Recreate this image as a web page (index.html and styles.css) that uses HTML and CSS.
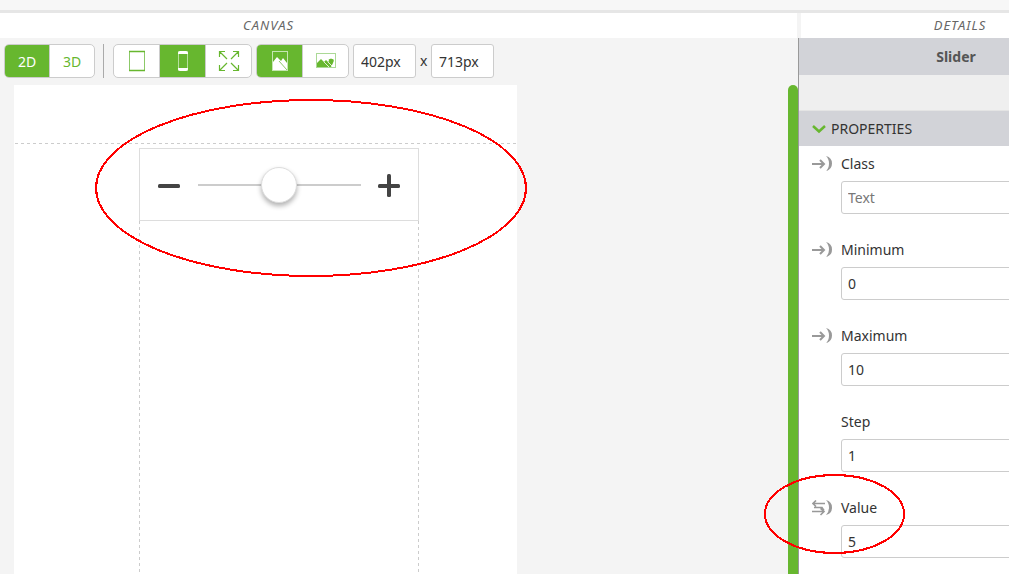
FILE: index.html
```html
<!DOCTYPE html>
<html lang="en">
<head>
<meta charset="utf-8">
<title>Slider</title>
<link rel="stylesheet" href="styles.css">
</head>
<body>
<div class="page">
  <div class="top-strip"></div>
  <header class="headings">
    <h2 class="heading heading-canvas">CANVAS</h2>
    <h2 class="heading heading-details"><span class="heading-text">DETAILS</span></h2>
  </header>
  <div class="main">
    <main class="workspace">
      <div class="toolbar">
        <div class="group">
          <button class="btn btn-text active">2D</button>
          <button class="btn btn-text">3D</button>
        </div>
        <span class="separator"></span>
        <div class="group group-devices">
          <button class="btn" aria-label="Tablet">
            <svg width="18" height="22" viewBox="0 0 18 22" fill="none"><rect x="1.500" y="1.500" width="15" height="19" stroke="#8cc968"/><path d="M1 1.500h16M1 20.500h16" stroke="#67b72f" stroke-width="1.400"/></svg>
          </button>
          <button class="btn active" aria-label="Phone">
            <svg width="20" height="24" viewBox="0 0 20 24"><rect x="5.500" y="3" width="9" height="18" fill="none" stroke="#b6df9e"/><path d="M5 4q0-2 2-2h6q2 0 2 2v1H5zM5 19h10v1q0 2-2 2H7q-2 0-2-2z" fill="#fff"/></svg>
          </button>
          <button class="btn" aria-label="Fit">
            <svg width="22" height="22" viewBox="0 0 22 22" fill="none" stroke="currentColor" stroke-width="1.200"><path d="M1.500 7V1.500H7M15 1.500h5.500V7M20.500 15v5.500H15M7 20.500H1.500V15M2 2l7 7M20 2l-7 7M20 20l-7-7M2 20l7-7"/></svg>
          </button>
        </div>
        <div class="group group-orientation">
          <button class="btn active" aria-label="Portrait">
            <svg width="18" height="22" viewBox="0 0 18 22"><rect x="1.500" y="1.500" width="15" height="19" fill="none" stroke="#c5e6b2"/><path d="M2 12l4-5 4 4 2-3 4 5v7H2z" fill="#fff"/><path d="M8 11l8 9" stroke="#8cc968"/></svg>
          </button>
          <button class="btn" aria-label="Landscape">
            <svg width="22" height="18" viewBox="0 0 22 18"><rect x="1.500" y="1.500" width="19" height="14" fill="#fff" stroke="#abd996"/><path d="M2 15v-4l4-4 3 3 2-2 2 2 1-1q-1-2 1-2 1-1 2 0 3 0 1 4l-2 4z" fill="#67b72f"/><path d="M9 10l5 5M13 10l4 4" stroke="#fff" stroke-width=".8"/></svg>
          </button>
        </div>
        <input class="text-box size-box" type="text" value="402px" aria-label="Width">
        <span class="times">x</span>
        <input class="text-box size-box" type="text" value="713px" aria-label="Height">
      </div>
      <div class="stage">
        <div class="artboard">
          <div class="guide-row"></div>
          <div class="guide-column">
            <div class="slider-box">
              <button class="step-btn" aria-label="Decrease"><svg width="24" height="24" viewBox="0 0 24 24"><rect x="1" y="10" width="22" height="4" rx="1.500" fill="#444"/></svg></button>
              <input class="slider" type="range" min="0" max="10" step="1" value="5" aria-label="Slider">
              <button class="step-btn" aria-label="Increase"><svg width="24" height="24" viewBox="0 0 24 24" fill="#444"><rect x="1" y="10" width="22" height="4" rx="1.500"/><rect x="10" y="0" width="4" height="23" rx="1.500"/></svg></button>
            </div>
            <div class="guides"></div>
          </div>
        </div>
        <div class="scroll-bar"></div>
      </div>
    </main>
    <aside class="details">
      <div class="details-inner">
        <h3 class="component-name">Slider</h3>
        <div class="details-gap"></div>
        <button class="section-title">
          <svg width="14" height="10" viewBox="0 0 14 10" fill="none" stroke="#67b72f" stroke-width="2.500"><path d="M1 2l6 5.500L13 2"/></svg>
          PROPERTIES
        </button>
        <div class="field">
          <svg class="bind" width="22" height="16" viewBox="0 0 22 16"><path d="M0 8h12M8 4l4 4-4 4" fill="none" stroke="#999" stroke-width="2"/><path d="M14 0q6 1.500 6 7.500T14 15q3-3 3-7.500T14 0z" fill="#999"/></svg>
          <label for="class">Class</label>
          <input class="text-box" id="class" type="text" placeholder="Text">
        </div>
        <div class="field">
          <svg class="bind" width="22" height="16" viewBox="0 0 22 16"><path d="M0 8h12M8 4l4 4-4 4" fill="none" stroke="#999" stroke-width="2"/><path d="M14 0q6 1.500 6 7.500T14 15q3-3 3-7.500T14 0z" fill="#999"/></svg>
          <label for="minimum">Minimum</label>
          <input class="text-box" id="minimum" type="text" value="0">
        </div>
        <div class="field">
          <svg class="bind" width="22" height="16" viewBox="0 0 22 16"><path d="M0 8h12M8 4l4 4-4 4" fill="none" stroke="#999" stroke-width="2"/><path d="M14 0q6 1.500 6 7.500T14 15q3-3 3-7.500T14 0z" fill="#999"/></svg>
          <label for="maximum">Maximum</label>
          <input class="text-box" id="maximum" type="text" value="10">
        </div>
        <div class="field">
          <label for="step">Step</label>
          <input class="text-box" id="step" type="text" value="1">
        </div>
        <div class="field">
          <svg class="bind" width="22" height="16" viewBox="0 0 22 16"><path d="M13 3.500H1M4 .5L1 3.500l3 3M2 7.500h8l2 3M0 11.500h12M8.500 8.500l3.500 3-3.500 3.500" fill="none" stroke="#999" stroke-width="1.600"/><path d="M14 0q6 1.500 6 7.500T14 15q3-3 3-7.500T14 0z" fill="#999"/></svg>
          <label for="value">Value</label>
          <input class="text-box" id="value" type="text" value="5">
        </div>
      </div>
    </aside>
  </div>
  <svg class="mark mark-slider" viewBox="0 0 432 178"><ellipse cx="216" cy="89" rx="215" ry="88"/></svg>
  <svg class="mark mark-value" viewBox="0 0 141 80"><ellipse cx="70.500" cy="40" rx="69.500" ry="39"/></svg>
</div>
</body>
</html>
```

FILE: styles.css
```css
* { box-sizing: border-box; }
body, h2, h3 { margin: 0; }
body, button, input {
  font-family: "Noto Sans", "Open Sans", sans-serif;
  font-size: 14px;
  color: #333;
}
button { padding: 0; border: 0; background: none; }
svg { display: block; }

.page {
  position: relative;
  display: flex;
  flex-direction: column;
  height: 100vh;
  overflow: hidden;
  background: #f4f4f4;
}
.top-strip {
  flex: none;
  height: 13px;
  background: #f7f7f7;
  border-bottom: 3px solid #e6e6e6;
}
.headings {
  flex: none;
  display: flex;
  gap: 4px;
  height: 25px;
}
.heading {
  background: #fff;
  font-size: 13px;
  font-style: italic;
  font-weight: 400;
  line-height: 25px;
  letter-spacing: 1px;
  color: #666;
}
.heading-canvas { flex: 1; padding-left: 243px; }
.heading-details { width: 208px; overflow: hidden; }
.heading-text { display: block; width: 318px; text-align: center; }

.main { flex: 1; display: flex; min-height: 0; }
.workspace {
  flex: 1;
  display: flex;
  flex-direction: column;
  min-width: 0;
}
.toolbar {
  display: flex;
  gap: 4px;
  padding: 6px 4px 7px;
}
.group {
  display: flex;
  height: 34px;
  overflow: hidden;
  border: 1px solid #ccc;
  border-radius: 5px;
  background: #fff;
}
.btn {
  display: flex;
  align-items: center;
  justify-content: center;
  width: 46px;
  color: #67b72f;
}
.btn + .btn { border-left: 1px solid #ccc; }
.btn:first-child { width: 45px; }
.btn-text:first-child { width: 44px; }
.btn-text { width: 45px; }
.btn.active { background: #67b72f; color: #fff; }
.separator {
  width: 1px;
  margin: 0 5px 0 4px;
  background: #aaa;
}
.text-box {
  height: 33px;
  padding: 0 6px;
  border: 1px solid #ccc;
  border-radius: 3px;
  background: #fff;
  outline: 0;
}
.text-box::placeholder { color: #777; }
.size-box { width: 63px; height: 34px; padding: 0 7px; }
.times { line-height: 34px; }
.toolbar .times { width: 7px; }

.stage {
  flex: 1;
  display: flex;
  justify-content: space-between;
  padding-left: 14px;
}
.artboard {
  flex: 0 1 503px;
  display: flex;
  flex-direction: column;
  background: #fff;
}
.guide-row {
  height: 59px;
  margin: 0 1px 4px;
  background: repeating-linear-gradient(90deg, #ccc 0 3px, transparent 3px 6px) bottom / 100% 1px no-repeat;
}
.guide-column {
  flex: 1;
  display: flex;
  flex-direction: column;
  width: 280px;
  margin-left: 125px;
}
.slider-box {
  display: flex;
  align-items: center;
  justify-content: space-between;
  height: 73px;
  padding: 0 17px;
  border: 1px solid #ddd;
}
.step-btn { padding-top: 2px; }
.slider {
  width: 163px;
  height: 36px;
  margin: 0;
  appearance: none;
  background: linear-gradient(#ccc, #ccc) center / 100% 2px no-repeat;
}
.slider::-webkit-slider-thumb {
  appearance: none;
  width: 36px;
  height: 36px;
  border: 1px solid #ddd;
  border-radius: 50%;
  background: #fff;
  box-shadow: 0 3px 5px rgba(0, 0, 0, 0.3);
}
.guides {
  flex: 1;
  background:
    repeating-linear-gradient(#ccc 0 3px, transparent 3px 6px) left / 1px 100% no-repeat,
    repeating-linear-gradient(#ccc 0 3px, transparent 3px 6px) right / 1px 100% no-repeat;
}
.scroll-bar {
  width: 10px;
  border-radius: 5px 5px 0 0;
  background: #67b72f;
}

.details {
  width: 211px;
  overflow: hidden;
  border-left: 1px solid #999;
  background: #fff;
}
.details-inner { width: 314px; }
.component-name {
  background: #d2d3d8;
  font-size: 14px;
  line-height: 37px;
  height: 37px;
  text-align: center;
  color: #555;
}
.details-gap { height: 36px; background: #efefef; border-bottom: 1px solid #e4e4e4; }
.section-title {
  display: flex;
  align-items: center;
  gap: 5px;
  width: 100%;
  height: 35px;
  padding-left: 13px;
  background: #d2d3d8;
}
.field {
  display: grid;
  grid-template-columns: 22px 1fr;
  grid-template-rows: 35px 33px;
  column-gap: 7px;
  align-items: center;
  padding: 0 12px 0 13px;
  margin-bottom: 18px;
}
.field label, .field .text-box { grid-column: 2; }
.bind { grid-row: 1; grid-column: 1; }

.mark {
  position: absolute;
  fill: none;
  stroke: #f00;
  stroke-width: 2px;
  pointer-events: none;
  shape-rendering: crispEdges;
}
.mark-slider { left: 95px; top: 99px; width: 432px; height: 178px; }
.mark-value { left: 764px; top: 474px; width: 141px; height: 80px; }
```
